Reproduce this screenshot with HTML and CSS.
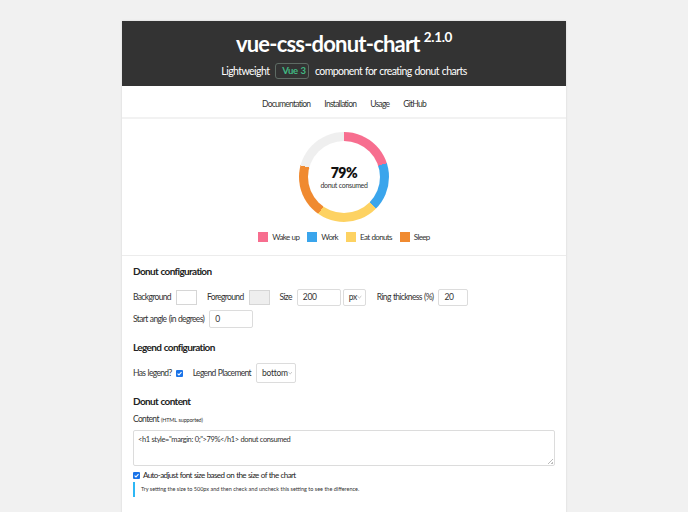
FILE: index.html
```html
<!DOCTYPE html>
<html>
<head>
<meta charset="utf-8">
<link rel="stylesheet" href="styles.css">
</head>
<body>
<div class="card">
  <header class="hero">
    <h1 class="title">vue-css-donut-chart<sup class="ver">2.1.0</sup></h1>
    <p class="subtitle">Lightweight <span class="vsel"><span>Vue&nbsp;3</span><svg class="chev" viewBox="0 0 6 4" width="5" height="4"><path d="M0.5 0.8 L3 3.2 L5.5 0.8" fill="none" stroke="#999" stroke-width="0.8"/></svg></span> component for creating donut charts</p>
  </header>
  <nav class="nav">
    <a>Documentation</a><a>Installation</a><a>Usage</a><a>GitHub</a>
  </nav>
  <section class="demo">
    <div class="donut">
      <div class="ring"></div>
      <div class="hole">
        <div class="pct">79%</div>
        <div class="cons">donut consumed</div>
      </div>
    </div>
    <ul class="legend">
      <li><span class="sw pink"></span>Wake up</li>
      <li><span class="sw blue"></span>Work</li>
      <li><span class="sw yellow"></span>Eat donuts</li>
      <li><span class="sw orange"></span>Sleep</li>
    </ul>
  </section>
  <section class="config">
    <h3 class="h">Donut configuration</h3>
    <div class="row">
      <label>Background</label><span class="color"></span>
      <label>Foreground</label><span class="color grey"></span>
      <label>Size</label><span class="inp size">200</span><span class="sel unit">px <svg class="chev" viewBox="0 0 6 4" width="5" height="4"><path d="M0.5 0.8 L3 3.2 L5.5 0.8" fill="none" stroke="#999" stroke-width="0.8"/></svg></span>
      <label>Ring thickness (%)</label><span class="inp ring-in">20</span>
    </div>
    <div class="row">
      <label>Start angle (in degrees)</label><span class="inp angle">0</span>
    </div>
    <h3 class="h">Legend configuration</h3>
    <div class="row">
      <label>Has legend?</label><span class="chk"><svg viewBox="0 0 8 8" width="7" height="7"><rect width="8" height="8" rx="1.2" fill="#1a73e8"/><path d="M1.8 4.1 L3.4 5.6 L6.3 2.5" fill="none" stroke="#fff" stroke-width="1.2"/></svg></span>
      <label>Legend Placement</label><span class="sel place">bottom <svg class="chev" viewBox="0 0 6 4" width="5" height="4"><path d="M0.5 0.8 L3 3.2 L5.5 0.8" fill="none" stroke="#999" stroke-width="0.8"/></svg></span>
    </div>
    <h3 class="h">Donut content</h3>
    <div class="lbl">Content <small>(HTML supported)</small></div>
    <div class="ta">&lt;h1 style="margin: 0;"&gt;79%&lt;/h1&gt; donut consumed<span class="grip"></span></div>
    <div class="check-row"><span class="chk"><svg viewBox="0 0 8 8" width="7" height="7"><rect width="8" height="8" rx="1.2" fill="#1a73e8"/><path d="M1.8 4.1 L3.4 5.6 L6.3 2.5" fill="none" stroke="#fff" stroke-width="1.2"/></svg></span>Auto-adjust font size based on the size of the chart</div>
    <div class="note">Try setting the size to 500px and then check and uncheck this setting to see the difference.</div>
  </section>
</div>
</body>
</html>
```
FILE: styles.css
```css
html, body { margin: 0; padding: 0; }
body {
  background: #f1f1f1;
  font-family: Lato, "Liberation Sans", sans-serif;
  color: #333;
}
.card {
  width: 444px;
  margin: 21px auto 0;
  background: #fff;
  box-shadow: 0 0 2px rgba(0,0,0,0.12);
  min-height: 500px;
}
.hero {
  background: #333;
  color: #fff;
  text-align: center;
  height: 65px;
  box-sizing: border-box;
  padding-top: 9px;
}
.title {
  margin: 0;
  font-size: 22px;
  line-height: 28px;
  font-weight: 700;
  letter-spacing: -0.8px;
}
.ver {
  font-size: 13.5px;
  letter-spacing: -0.3px;
  vertical-align: 0;
  position: relative;
  top: -10px;
  margin-left: 4px;
}
.subtitle {
  margin: 1px 0 0;
  font-size: 10.5px;
  line-height: 18px;
  letter-spacing: -0.55px;
  word-spacing: 0.6px;
}
.vsel {
  display: inline-flex;
  align-items: center;
  justify-content: space-between;
  gap: 3px;
  white-space: nowrap;
  border: 1px solid #5e6b64;
  border-radius: 3px;
  color: #41b883;
  font-weight: 700;
  font-size: 9.5px;
  letter-spacing: -0.3px;
  padding: 0 3px 0 6px;
  height: 16px;
  box-sizing: border-box;
  width: 34px;
  vertical-align: middle;
  margin: -2px 3px 0;
}
.nav {
  display: flex;
  justify-content: center;
  gap: 14px;
  font-size: 8.5px;
  letter-spacing: -0.75px;
  height: 33px;
  box-sizing: border-box;
  padding-top: 4px;
  align-items: center;
  border-bottom: 2px solid #f2f2f2;
}
.demo {
  display: flex;
  flex-direction: column;
  align-items: center;
  padding-top: 13px;
  border-bottom: 1px solid #ececec;
  height: 123px;
}
.donut {
  width: 90px;
  height: 90px;
  position: relative;
}
.ring {
  width: 100%;
  height: 100%;
  border-radius: 50%;
  background: conic-gradient(#f76e8f 0 72deg, #3aa5ec 72deg 135deg, #fdd262 135deg 215deg, #f08a30 215deg 285deg, #efefef 285deg 360deg);
}
.hole {
  position: absolute;
  inset: 9px;
  border-radius: 50%;
  background: #fff;
  display: flex;
  flex-direction: column;
  align-items: center;
  justify-content: center;
}
.pct { font-size: 14px; font-weight: 800; line-height: 15px; color: #111; letter-spacing: -0.4px; }
.cons { font-size: 7px; line-height: 9px; margin-top: 1px; letter-spacing: -0.35px; word-spacing: 0.5px; }
.legend {
  list-style: none;
  display: flex;
  gap: 8px;
  margin: 10px 0 0;
  padding: 0;
  font-size: 8px;
  letter-spacing: -0.65px;
  word-spacing: 0.6px;
}
.legend li { display: flex; align-items: center; gap: 4px; }
.sw { width: 10px; height: 10px; display: inline-block; }
.pink { background: #f76e8f; }
.blue { background: #3aa5ec; }
.yellow { background: #fdd262; }
.orange { background: #f08a30; }
.config {
  padding: 9px 11px 0;
  font-size: 8.5px;
  letter-spacing: -0.65px;
  word-spacing: 0.7px;
}
.h {
  margin: 0 0 10px;
  font-size: 10px;
  line-height: 13px;
  font-weight: 700;
  color: #222;
  letter-spacing: -0.65px;
}
.row {
  display: flex;
  align-items: center;
  height: 18px;
  margin-bottom: 4px;
}
.row label { margin-right: 5px; }
.color {
  width: 19px; height: 13px;
  border: 1px solid #d6d6d6;
  margin-right: 10px;
}
.color.grey { background: #eee; }
.inp, .sel {
  display: inline-flex;
  align-items: center;
  border: 1px solid #dcdcdc;
  border-radius: 2px;
  height: 17px;
  padding: 0 5px;
  box-sizing: border-box;
  font-size: 8.5px;
  letter-spacing: -0.3px;
}
.sel { justify-content: space-between; }
.size { width: 44px; }
.unit { width: 23px; margin: 0 11px 0 2px; padding: 0 3px 0 5px; }
.ring-in { width: 30px; }
.angle { width: 44px; height: 18px; }
.place { width: 40px; height: 20px; margin: -1px 0; padding: 0 3px 0 5px; }
.chk { display: inline-flex; width: 7px; height: 7px; }
.row .chk { margin-right: 10px; margin-left: -1px; }
.row + .h { margin-top: 13px; }
.lbl { font-size: 8.5px; margin: -4px 0 6px; }
.lbl small { font-size: 5.5px; letter-spacing: -0.2px; }
.ta {
  position: relative;
  border: 1px solid #dcdcdc;
  border-radius: 2px;
  height: 36px;
  box-sizing: border-box;
  padding: 4px 4px;
  font-size: 7.5px;
  letter-spacing: -0.4px;
  word-spacing: 0.3px;
}
.grip {
  position: absolute;
  right: 1px; bottom: 1px;
  width: 5px; height: 5px;
  background: linear-gradient(135deg, transparent 45%, #bbb 45%, #bbb 55%, transparent 55%, transparent 75%, #bbb 75%);
}
.check-row {
  display: flex;
  align-items: center;
  gap: 3px;
  margin-top: 4px;
  font-size: 8px;
  letter-spacing: -0.6px;
  word-spacing: 0.6px;
  color: #222;
}
.note {
  margin-top: 2px;
  border-left: 2px solid #2db7f5;
  padding: 4px 6px;
  font-size: 5.5px;
  line-height: 7px;
  letter-spacing: 0;
  word-spacing: 0;
}
```
